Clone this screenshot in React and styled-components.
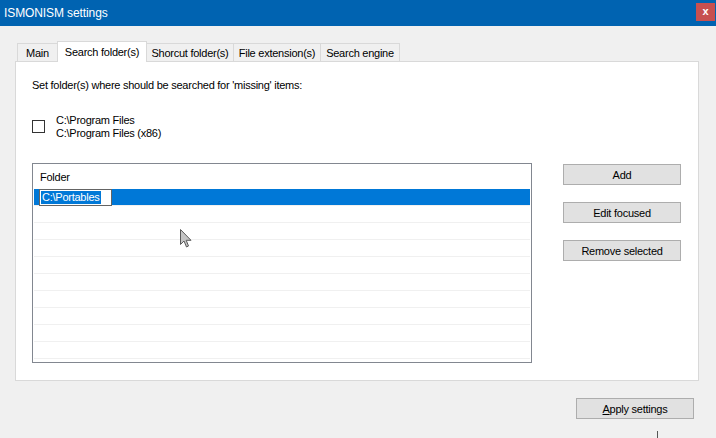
import React from "react";
import styled, { createGlobalStyle } from "styled-components";

const Global = createGlobalStyle`
  html, body { margin: 0; padding: 0; background: #f0f0f0; }
  body { font-family: "Liberation Sans", Arial, sans-serif; font-size: 11px; letter-spacing: -0.25px; color: #000; }
  * { box-sizing: border-box; }
`;

const Window = styled.div`
  position: relative;
  width: 716px;
  height: 438px;
  overflow: hidden;
  background: #f0f0f0;
  display: flex;
  flex-direction: column;
`;

const TitleBar = styled.div`
  height: 26px;
  flex: none;
  background: #0063b1;
  display: flex;
  align-items: flex-start;
  justify-content: space-between;
  padding: 0 1px 0 4px;
`;

const Title = styled.div`
  color: #fff;
  font-size: 12px;
  letter-spacing: -0.1px;
  line-height: 26px;
`;

const Close = styled.div`
  margin-top: 3px;
  width: 19px;
  height: 18px;
  background: #c75050;
  color: #fff;
  font-weight: bold;
  font-size: 11px;
  letter-spacing: 0;
  line-height: 17px;
  text-align: center;
`;

const Body = styled.div`
  padding: 15px 17px 0 15px;
  display: flex;
  flex-direction: column;
`;

const TabStrip = styled.div`
  height: 20px;
  display: flex;
  align-items: flex-end;
  padding-left: 2px;
  position: relative;
  z-index: 1;
`;

const Tab = styled.div`
  width: ${(p) => p.$w}px;
  height: ${(p) => (p.$active ? 21 : 18)}px;
  margin-bottom: ${(p) => (p.$active ? -1 : 0)}px;
  background: ${(p) => (p.$active ? "#fff" : "#f0f0f0")};
  border: 1px solid #d9d9d9;
  border-bottom: none;
  margin-left: ${(p) => (p.$first ? 0 : -1)}px;
  position: relative;
  z-index: ${(p) => (p.$active ? 2 : 1)};
  display: flex;
  align-items: ${(p) => (p.$active ? "flex-start" : "center")};
  padding-top: ${(p) => (p.$active ? 4 : 1)}px;
  justify-content: center;
  font-size: 11px;
  white-space: nowrap;
`;

const Panel = styled.div`
  height: 320px;
  background: #fff;
  border: 1px solid #d9d9d9;
  padding: 17px 0 0 16px;
  display: flex;
  flex-direction: column;
`;

const Intro = styled.div`
  line-height: 13px;
`;

const CheckRow = styled.div`
  margin-top: 22px;
  display: flex;
  align-items: center;
  gap: 11px;
`;

const CheckBox = styled.div`
  width: 13px;
  height: 13px;
  border: 1px solid #333;
  background: #fff;
  margin-top: -2px;
`;

const CheckLabel = styled.div`
  line-height: 13px;
`;

const Content = styled.div`
  margin-top: 23px;
  display: flex;
  align-items: flex-start;
  gap: 31px;
`;

const List = styled.div`
  width: 500px;
  height: 200px;
  border: 1px solid #828790;
  background: #fff;
  overflow: hidden;
  padding: 0 1px;
`;

const Header = styled.div`
  height: 25px;
  padding-left: 6px;
  display: flex;
  align-items: center;
  padding-top: 1px;
`;

const Row = styled.div`
  height: 17px;
  border-bottom: 1px solid #f0f0f0;
  background: ${(p) => (p.$selected ? "#0078d7" : "transparent")};
  display: flex;
  align-items: stretch;
  padding-left: 5px;
`;

const EditBox = styled.div`
  width: 73px;
  height: 17px;
  border: 1px solid #646464;
  background: #fff;
  padding: 1px 0 0 1px;
  display: flex;
  align-items: flex-start;
`;

const SelText = styled.span`
  background: #0078d7;
  color: #fff;
  line-height: 13px;
  padding: 0 1px;
`;

const Buttons = styled.div`
  display: flex;
  flex-direction: column;
  gap: 17px;
  margin-top: 1px;
`;

const Button = styled.div`
  width: ${(p) => p.$w || 118}px;
  height: 21px;
  background: #e1e1e1;
  border: 1px solid #adadad;
  display: flex;
  align-items: center;
  justify-content: center;
  font-size: 11px;
`;

const Footer = styled.div`
  display: flex;
  justify-content: flex-end;
  padding: 17px 5px 0 0;
`;

const Underline = styled.span`
  text-decoration: underline;
`;

const Cursor = styled.svg`
  position: absolute;
  left: 180px;
  top: 229px;
`;

const Tick = styled.div`
  position: absolute;
  left: 657px;
  top: 431px;
  width: 1px;
  height: 7px;
  background: #555;
`;

const tabs = [
  { label: "Main", w: 41 },
  { label: "Search folder(s)", w: 90, active: true },
  { label: "Shorcut folder(s)", w: 88 },
  { label: "File extension(s)", w: 88 },
  { label: "Search engine", w: 80 },
];

export default function App() {
  const rows = Array.from({ length: 11 });
  return (
    <>
      <Global />
      <Window>
        <TitleBar>
          <Title>ISMONISM settings</Title>
          <Close>x</Close>
        </TitleBar>
        <Body>
          <TabStrip>
            {tabs.map((t, i) => (
              <Tab key={t.label} $w={t.w} $active={t.active} $first={i === 0}>
                {t.label}
              </Tab>
            ))}
          </TabStrip>
          <Panel>
            <Intro>Set folder(s) where should be searched for 'missing' items:</Intro>
            <CheckRow>
              <CheckBox />
              <CheckLabel>
                C:\Program Files
                <br />
                C:\Program Files (x86)
              </CheckLabel>
            </CheckRow>
            <Content>
              <List>
                <Header>Folder</Header>
                {rows.map((_, i) => (
                  <Row key={i} $selected={i === 0}>
                    {i === 0 && (
                      <EditBox>
                        <SelText>C:\Portables</SelText>
                      </EditBox>
                    )}
                  </Row>
                ))}
              </List>
              <Buttons>
                <Button>Add</Button>
                <Button>Edit focused</Button>
                <Button>Remove selected</Button>
              </Buttons>
            </Content>
          </Panel>
          <Footer>
            <Button>
              <Underline>A</Underline>pply settings
            </Button>
          </Footer>
        </Body>
        <Cursor width="13" height="20" viewBox="0 0 13 20">
          <path
            d="M0.5 0.5 L0.5 15.5 L4 12 L6.5 18 L8.5 17 L6.2 11.3 L11 11.3 Z"
            fill="#c4c4c4"
            stroke="#5a5a5a"
            strokeWidth="1"
            strokeLinejoin="round"
          />
        </Cursor>
        <Tick />
      </Window>
    </>
  );
}
